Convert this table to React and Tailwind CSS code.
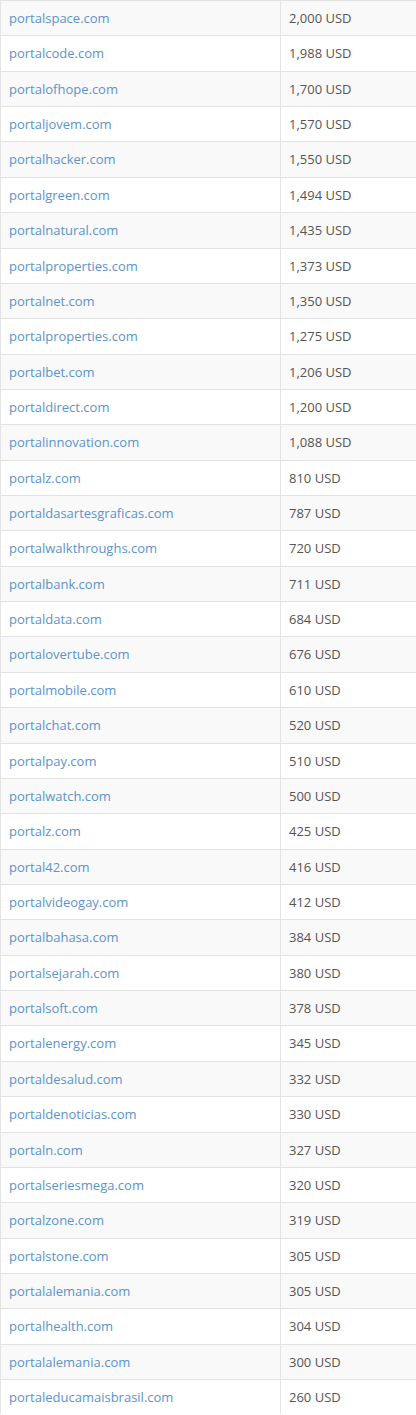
import React from 'react';

const rows = [
  ['portalspace.com', '2,000 USD'],
  ['portalcode.com', '1,988 USD'],
  ['portalofhope.com', '1,700 USD'],
  ['portaljovem.com', '1,570 USD'],
  ['portalhacker.com', '1,550 USD'],
  ['portalgreen.com', '1,494 USD'],
  ['portalnatural.com', '1,435 USD'],
  ['portalproperties.com', '1,373 USD'],
  ['portalnet.com', '1,350 USD'],
  ['portalproperties.com', '1,275 USD'],
  ['portalbet.com', '1,206 USD'],
  ['portaldirect.com', '1,200 USD'],
  ['portalinnovation.com', '1,088 USD'],
  ['portalz.com', '810 USD'],
  ['portaldasartesgraficas.com', '787 USD'],
  ['portalwalkthroughs.com', '720 USD'],
  ['portalbank.com', '711 USD'],
  ['portaldata.com', '684 USD'],
  ['portalovertube.com', '676 USD'],
  ['portalmobile.com', '610 USD'],
  ['portalchat.com', '520 USD'],
  ['portalpay.com', '510 USD'],
  ['portalwatch.com', '500 USD'],
  ['portalz.com', '425 USD'],
  ['portal42.com', '416 USD'],
  ['portalvideogay.com', '412 USD'],
  ['portalbahasa.com', '384 USD'],
  ['portalsejarah.com', '380 USD'],
  ['portalsoft.com', '378 USD'],
  ['portalenergy.com', '345 USD'],
  ['portaldesalud.com', '332 USD'],
  ['portaldenoticias.com', '330 USD'],
  ['portaln.com', '327 USD'],
  ['portalseriesmega.com', '320 USD'],
  ['portalzone.com', '319 USD'],
  ['portalstone.com', '305 USD'],
  ['portalalemania.com', '305 USD'],
  ['portalhealth.com', '304 USD'],
  ['portalalemania.com', '300 USD'],
  ['portaleducamaisbrasil.com', '260 USD'],
];

const App = () => {
  return (
    <div className="w-[416px] overflow-hidden bg-white font-['Open_Sans',sans-serif] text-[13px]">
      <div className="w-[430px] border-l border-[#e4e4e4]">
        {rows.map(([domain, price], i) => (
          <div
            key={i}
            className={`flex border-t border-[#e2e2e2] ${i % 2 === 0 ? 'bg-[#f9f9f9]' : 'bg-white'}`}
          >
            <div className="w-[280px] shrink-0 border-r border-[#e4e4e4] px-2 py-2 leading-[18.36px]">
              <a href="#" className="text-[#5b93cc]">{domain}</a>
            </div>
            <div className="flex-1 px-2 py-2 leading-[18.36px] text-[#555]">{price}</div>
          </div>
        ))}
      </div>
    </div>
  );
};

export default App;
